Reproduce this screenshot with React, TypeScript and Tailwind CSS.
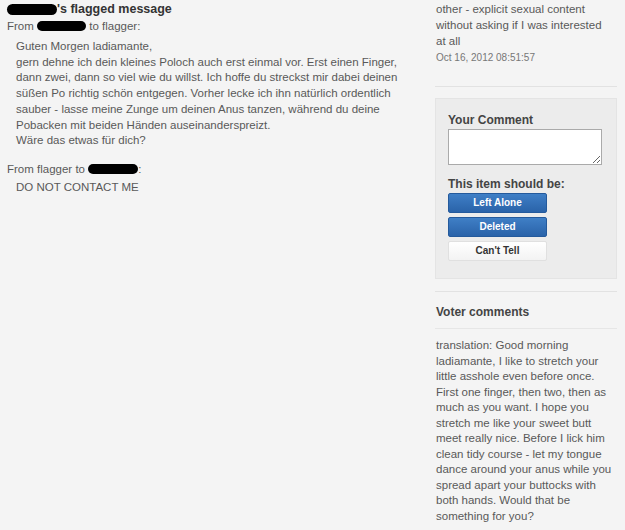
import React from 'react';

function Redact({ w, h = 10 }: { w: number; h?: number }) {
  return (
    <span
      className="inline-block bg-black rounded-full align-middle"
      style={{ width: w, height: h }}
    />
  );
}

const body = [
  'Guten Morgen ladiamante,',
  'gern dehne ich dein kleines Poloch auch erst einmal vor. Erst einen Finger,',
  'dann zwei, dann so viel wie du willst. Ich hoffe du streckst mir dabei deinen',
  'süßen Po richtig schön entgegen. Vorher lecke ich ihn natürlich ordentlich',
  'sauber - lasse meine Zunge um deinen Anus tanzen, während du deine',
  'Pobacken mit beiden Händen auseinanderspreizt.',
  'Wäre das etwas für dich?',
];

const translation = [
  'translation: Good morning',
  'ladiamante, I like to stretch your',
  'little asshole even before once.',
  'First one finger, then two, then as',
  'much as you want. I hope you',
  'stretch me like your sweet butt',
  'meet really nice. Before I lick him',
  'clean tidy course - let my tongue',
  'dance around your anus while you',
  'spread apart your buttocks with',
  'both hands. Would that be',
  'something for you?',
];

export default function App() {
  return (
    <div
      className="w-[625px] h-[530px] overflow-hidden bg-[#f4f4f4] text-[#595959] text-[11.5px] leading-[16px] flex"
      style={{ fontFamily: '"Liberation Sans", Arial, sans-serif' }}
    >
      {/* left: message thread */}
      <div className="w-[435px] pl-[7px] pt-[1px]">
        <div className="flex items-center font-bold text-[12.5px] text-[#333] h-[16px]">
          <Redact w={50} h={11} />
          <span>'s flagged message</span>
        </div>
        <div className="flex items-center h-[17px]">
          <span>From&nbsp;</span>
          <Redact w={49} />
          <span>&nbsp;to flagger:</span>
        </div>
        <div className="pl-[9px] pt-[5px] leading-[15.7px]">
          {body.map((l, i) => (
            <div key={i}>{l}</div>
          ))}
        </div>
        <div className="flex items-center h-[17px] mt-[12px]">
          <span>From flagger to&nbsp;</span>
          <Redact w={50} />
          <span>:</span>
        </div>
        <div className="pl-[9px] pt-[1px]">DO NOT CONTACT ME</div>
      </div>

      {/* right: report + vote panel */}
      <div className="w-[182px] pt-[1px]">
        <div className="pl-[1px]">
          <div>other - explicit sexual content</div>
          <div>without asking if I was interested</div>
          <div>at all</div>
          <div className="text-[10px] text-[#777] mt-[1px]">Oct 16, 2012 08:51:57</div>
        </div>
        <div className="border-t border-[#e2e2e2] mt-[20px]" />
        <div className="mt-[11px] bg-[#ececec] border border-[#e4e4e4] h-[181px] pl-[12px] pt-[13px]">
          <div className="font-bold text-[12px] text-[#444]">Your Comment</div>
          <textarea className="block w-[154px] h-[36px] bg-white border border-[#aaa] mt-[1px] resize-y" />
          <div className="font-bold text-[12px] text-[#444] mt-[12px] leading-[15px]">This item should be:</div>
          <div className="flex flex-col gap-[4px] mt-[1px]">
            <button className="w-[99px] h-[20px] rounded-[2px] bg-gradient-to-b from-[#3f7fc6] to-[#2a63a9] border border-[#245a9c] text-white font-bold text-[10px]">
              Left Alone
            </button>
            <button className="w-[99px] h-[20px] rounded-[2px] bg-gradient-to-b from-[#3f7fc6] to-[#2a63a9] border border-[#245a9c] text-white font-bold text-[10px]">
              Deleted
            </button>
            <button className="w-[99px] h-[20px] rounded-[2px] bg-gradient-to-b from-white to-[#f3f3f3] border border-[#e0e0e0] text-[#333] font-bold text-[10px]">
              Can't Tell
            </button>
          </div>
        </div>
        <div className="border-t border-[#e2e2e2] mt-[12px]" />
        <div className="font-bold text-[12px] text-[#444] pl-[1px] pt-[12px] pb-[8px]">Voter comments</div>
        <div className="border-t border-[#e6e6e6]" />
        <div className="pl-[1px] pt-[9px] leading-[15.5px]">
          {translation.map((l, i) => (
            <div key={i}>{l}</div>
          ))}
        </div>
      </div>
    </div>
  );
}
